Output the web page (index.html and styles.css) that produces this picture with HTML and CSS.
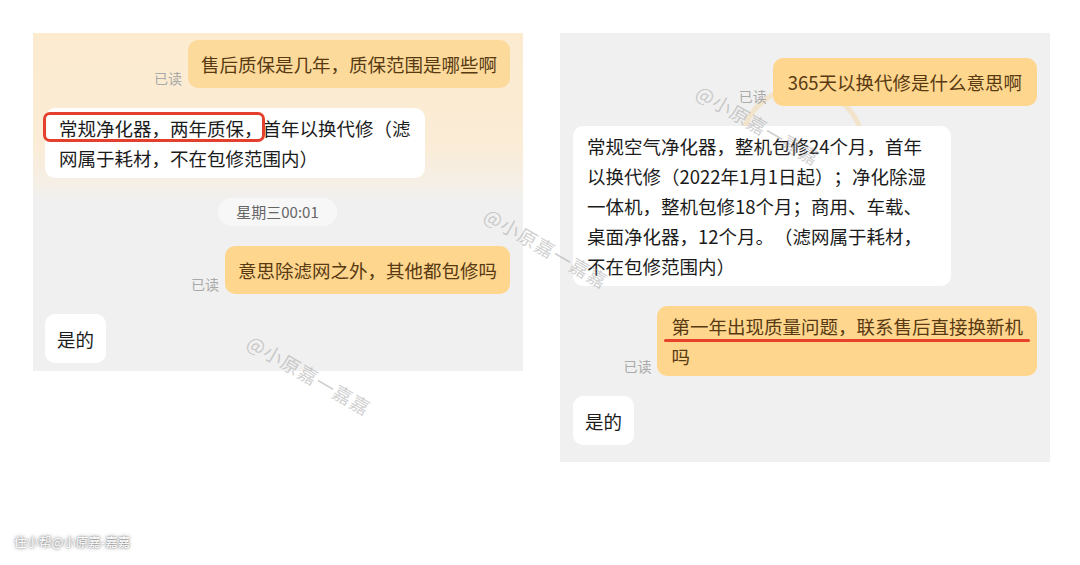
FILE: index.html
```html
<!DOCTYPE html>
<html lang="zh-CN">
<head>
  <meta charset="UTF-8" />
  <meta name="viewport" content="width=device-width, initial-scale=1.0" />
  <title>售后质保聊天记录</title>
  <link rel="stylesheet" href="styles.css">
</head>
<body>
  <div class="page">
    <div class="panel left">
      <div class="row out">
        <span class="read">已读</span>
        <div class="bubble sent one light">售后质保是几年，质保范围是哪些啊</div>
      </div>
      <div class="row in">
        <div class="bubble recv"><span class="boxed">常规净化器，两年质保，</span>首年以换代修（滤<br>网属于耗材，不在包修范围内）</div>
      </div>
      <div class="time">星期三00:01</div>
      <div class="row out">
        <span class="read">已读</span>
        <div class="bubble sent one">意思除滤网之外，其他都包修吗</div>
      </div>
      <div class="row in">
        <div class="bubble recv one">是的</div>
      </div>
    </div>

    <div class="panel right">
      <div class="ring"></div>
      <div class="row out">
        <span class="read">已读</span>
        <div class="bubble sent one roomy">365天以换代修是什么意思啊</div>
      </div>
      <div class="row in">
        <div class="bubble recv wide">常规空气净化器，整机包修24个月，首年<br>以换代修（2022年1月1日起）；净化除湿<br>一体机，整机包修18个月；商用、车载、<br>桌面净化器，12个月。（滤网属于耗材，<br>不在包修范围内）</div>
      </div>
      <div class="row out">
        <span class="read">已读</span>
        <div class="bubble sent"><span class="underlined">第一年出现质量问题，联系售后直接换新机</span><br>吗</div>
      </div>
      <div class="row in">
        <div class="bubble recv one">是的</div>
      </div>
    </div>
  </div>

  <!-- watermarks -->
  <div class="wm wm-a">@小原嘉一嘉嘉</div>
  <div class="wm wm-b">@小原嘉一嘉嘉</div>
  <div class="wm wm-c">@小原嘉一嘉嘉</div>
  <div class="stamp">住小帮@小原嘉-嘉嘉</div>
</body>
</html>
```

FILE: styles.css
```css
body {
  margin: 0;
  background: #fff;
  font-family: "Noto Sans CJK SC", "Noto Sans", sans-serif;
  text-spacing-trim: space-all;
  width: 1080px;
  height: 565px;
  overflow: hidden;
  position: relative;
}
.page {
  display: flex;
  align-items: flex-start;
  gap: 37px;
  padding: 33px 0 0 33px;
}
.panel {
  position: relative;
  width: 490px;
  box-sizing: border-box;
  background: #f0f0f0;
  display: flex;
  flex-direction: column;
  gap: 20px;
}
.panel.left {
  padding: 7px 13px 8px 12px;
  background: linear-gradient(180deg, #fcebcf 0, #fbecd6 110px, #f5efe6 150px, #f0f0f0 168px);
}
.panel.right {
  padding: 25px 13px 17px 13px;
}
.ring {
  position: absolute;
  left: 178px;
  top: 52px;
  width: 118px;
  height: 118px;
  border: 5px solid rgba(250, 200, 120, 0.3);
  border-radius: 50%;
}
.row {
  position: relative;
  display: flex;
  align-items: flex-end;
  gap: 6px;
}
.row.out {
  justify-content: flex-end;
}
.row.in {
  justify-content: flex-start;
}
.read {
  font-size: 14px;
  line-height: 20px;
  color: #aaa;
}
.bubble {
  font-size: 18.5px;
  line-height: 30px;
  padding: 5px 14px;
  border-radius: 10px;
  white-space: nowrap;
}
.bubble.one {
  padding: 9px 13px;
}
.bubble.roomy {
  padding: 9px 15px;
}
.sent {
  background: #fed68e;
  color: #583a12;
}
.sent.light {
  background: #fcda9b;
}
.recv {
  background: #fff;
  color: #1b1b1b;
}
.recv.one {
  padding: 9.5px 12px;
}
.recv.wide {
  padding-right: 25px;
}
.boxed {
  position: relative;
}
.boxed::before {
  content: '';
  position: absolute;
  left: -16px;
  right: -2px;
  top: -3px;
  bottom: -1px;
  border: 3px solid #e3402d;
  border-radius: 7px;
}
.underlined {
  position: relative;
}
.underlined::after {
  content: '';
  position: absolute;
  left: -7px;
  right: -7px;
  bottom: -3px;
  height: 3px;
  background: #e8412c;
  border-radius: 2px;
}
.time {
  align-self: center;
  height: 28px;
  line-height: 28px;
  padding: 0 18px;
  border-radius: 14px;
  background: #f7f7f7;
  color: #666;
  font-size: 15px;
}
.wm {
  position: absolute;
  font-size: 19px;
  line-height: 20px;
  color: rgba(150, 150, 150, 0.45);
  letter-spacing: 1px;
  transform: rotate(30deg);
  transform-origin: left center;
  white-space: nowrap;
}
.wm-a {
  left: 698px;
  top: 80px;
}
.wm-b {
  left: 486px;
  top: 203px;
}
.wm-c {
  left: 249px;
  top: 330px;
}
.stamp {
  position: absolute;
  left: 14px;
  top: 534px;
  font-size: 12.5px;
  line-height: 16px;
  color: #fff;
  text-shadow: 0 0 2px #777, 0 0 4px #999;
}
```
